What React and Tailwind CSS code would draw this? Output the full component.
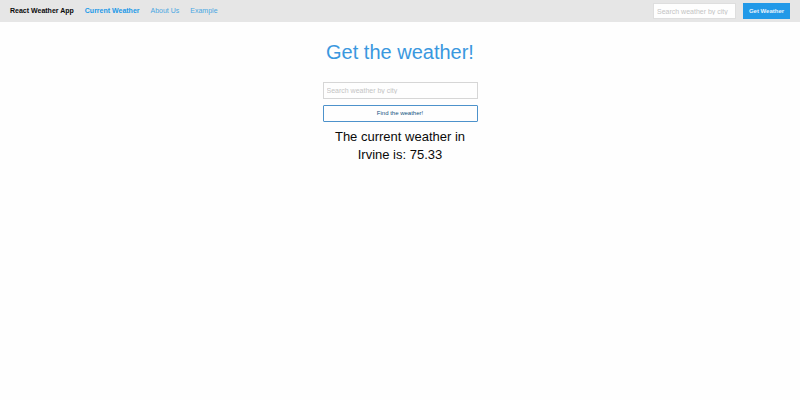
export default function App() {
  return (
    <div className="min-h-screen bg-[#fefefe] font-['Liberation_Sans',Arial,sans-serif] text-[#0a0a0a]">
      <header className="flex items-center justify-between bg-[#e6e6e6] pt-[3px] pr-[10px] pb-[3px] pl-[10px]">
        <nav className="flex items-center gap-[11px] text-[7px] leading-3">
          <span className="font-bold">React Weather App</span>
          <a href="#weather" className="font-bold text-[#2199e8]">Current Weather</a>
          <a href="#about" className="text-[#4aa6e2]">About Us</a>
          <a href="#example" className="text-[#4aa6e2]">Example</a>
        </nav>
        <form className="flex items-center gap-[7px]">
          <input
            type="text"
            aria-label="Search weather by city"
            placeholder="Search weather by city"
            className="h-4 w-[83px] border border-[#dedede] bg-[#fefefe] px-[3px] text-[7px] placeholder:text-[#c4c4c4]"
          />
          <button type="button" className="h-4 w-[47px] bg-[#2199e8] text-[6px] font-bold text-[#e8f4fd]">Get Weather</button>
        </form>
      </header>
      <main className="mx-auto w-[155px] pt-[18px] text-center">
        <h1 className="text-[20px] leading-6 whitespace-nowrap text-[#3a98df]">Get the weather!</h1>
        <form className="mt-[18px] flex flex-col gap-[6px]">
          <input
            type="text"
            aria-label="City"
            placeholder="Search weather by city"
            className="h-[17px] border border-[#d6d6d6] bg-[#fefefe] px-[3px] text-[7px] placeholder:text-[#c4c4c4]"
          />
          <button type="button" className="h-[17px] rounded-[1px] border border-[#4d92cb] text-[6px] text-[#14527f]">Find the weather!</button>
        </form>
        <p className="mt-[6px] px-[10px] text-[13px] leading-[18px]">The current weather in Irvine is: 75.33</p>
      </main>
    </div>
  );
}
